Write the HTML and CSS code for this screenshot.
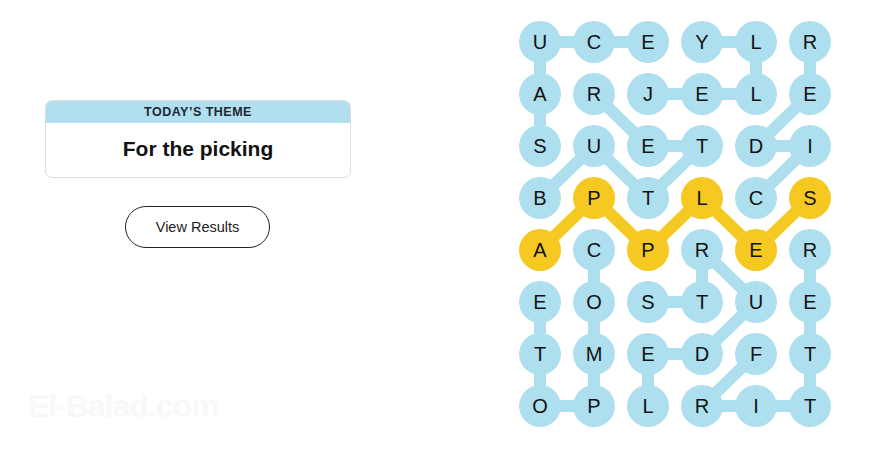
FILE: index.html
```html
<!DOCTYPE html>
<html lang="en">
<head>
<meta charset="utf-8">
<title>Strands</title>
<link rel="stylesheet" href="styles.css">
</head>
<body>
<main class="page">
  <section class="side">
    <div class="theme-card">
      <div class="theme-head">TODAY’S THEME</div>
      <div class="theme-body">For the picking</div>
    </div>
    <button class="results-btn">View Results</button>
  </section>
  <section class="board">
    <svg class="links" width="324" height="416" viewBox="0 0 324 416">
      <g fill="none" stroke="#aedfee" stroke-width="12" stroke-linejoin="round" stroke-linecap="round">
        <polyline points="27,130 27,78 27,26 81,26 135,26"/>
        <polyline points="135,78 189,78 243,78 243,26 189,26"/>
        <polyline points="243,182 297,130 243,130 297,78 297,26"/>
        <polyline points="27,182 81,130 135,182 189,130 135,130 81,78"/>
        <polyline points="81,234 81,286 81,338 81,390 27,390 27,338 27,286"/>
        <polyline points="135,286 189,286 189,234 243,286 189,338 135,338 135,390"/>
        <polyline points="243,338 189,390 243,390 297,390 297,338 297,286 297,234"/>
      </g>
      <polyline points="27,234 81,182 135,234 189,182 243,234 297,182" fill="none" stroke="#f5c922" stroke-width="12" stroke-linejoin="round" stroke-linecap="round"/>
    </svg>
    <div class="grid">
      <div class="cell"><span class="dot">U</span></div>
      <div class="cell"><span class="dot">C</span></div>
      <div class="cell"><span class="dot">E</span></div>
      <div class="cell"><span class="dot">Y</span></div>
      <div class="cell"><span class="dot">L</span></div>
      <div class="cell"><span class="dot">R</span></div>

      <div class="cell"><span class="dot">A</span></div>
      <div class="cell"><span class="dot">R</span></div>
      <div class="cell"><span class="dot">J</span></div>
      <div class="cell"><span class="dot">E</span></div>
      <div class="cell"><span class="dot">L</span></div>
      <div class="cell"><span class="dot">E</span></div>

      <div class="cell"><span class="dot">S</span></div>
      <div class="cell"><span class="dot">U</span></div>
      <div class="cell"><span class="dot">E</span></div>
      <div class="cell"><span class="dot">T</span></div>
      <div class="cell"><span class="dot">D</span></div>
      <div class="cell"><span class="dot">I</span></div>

      <div class="cell"><span class="dot">B</span></div>
      <div class="cell"><span class="dot spangram">P</span></div>
      <div class="cell"><span class="dot">T</span></div>
      <div class="cell"><span class="dot spangram">L</span></div>
      <div class="cell"><span class="dot">C</span></div>
      <div class="cell"><span class="dot spangram">S</span></div>

      <div class="cell"><span class="dot spangram">A</span></div>
      <div class="cell"><span class="dot">C</span></div>
      <div class="cell"><span class="dot spangram">P</span></div>
      <div class="cell"><span class="dot">R</span></div>
      <div class="cell"><span class="dot spangram">E</span></div>
      <div class="cell"><span class="dot">R</span></div>

      <div class="cell"><span class="dot">E</span></div>
      <div class="cell"><span class="dot">O</span></div>
      <div class="cell"><span class="dot">S</span></div>
      <div class="cell"><span class="dot">T</span></div>
      <div class="cell"><span class="dot">U</span></div>
      <div class="cell"><span class="dot">E</span></div>

      <div class="cell"><span class="dot">T</span></div>
      <div class="cell"><span class="dot">M</span></div>
      <div class="cell"><span class="dot">E</span></div>
      <div class="cell"><span class="dot">D</span></div>
      <div class="cell"><span class="dot">F</span></div>
      <div class="cell"><span class="dot">T</span></div>

      <div class="cell"><span class="dot">O</span></div>
      <div class="cell"><span class="dot">P</span></div>
      <div class="cell"><span class="dot">L</span></div>
      <div class="cell"><span class="dot">R</span></div>
      <div class="cell"><span class="dot">I</span></div>
      <div class="cell"><span class="dot">T</span></div>
    </div>
  </section>
  <div class="watermark">El-Balad.com</div>
</main>
</body>
</html>
```
FILE: styles.css
```css
* { box-sizing: border-box; }
html, body {
  margin: 0;
  padding: 0;
  background: #ffffff;
}
body {
  font-family: "Liberation Sans", Arial, sans-serif;
  color: #121212;
  width: 870px;
  height: 457px;
  overflow: hidden;
}
.page {
  position: relative;
  display: flex;
  align-items: flex-start;
  height: 457px;
}
.side {
  width: 513px;
  padding-left: 45px;
  padding-top: 100px;
  display: flex;
  flex-direction: column;
  align-items: flex-start;
}
.theme-card {
  width: 306px;
  height: 78px;
  border: 1px solid #dcdcdc;
  border-radius: 7px;
  overflow: hidden;
  display: flex;
  flex-direction: column;
}
.theme-head {
  background: #b1dfee;
  height: 22px;
  display: flex;
  align-items: center;
  justify-content: center;
  font-size: 12.5px;
  font-weight: 700;
  letter-spacing: 0.5px;
  color: #1d2733;
}
.theme-body {
  flex: 1;
  display: flex;
  align-items: center;
  justify-content: center;
  font-size: 21px;
  font-weight: 700;
  color: #121212;
  padding-bottom: 2px;
}
.results-btn {
  margin-top: 28px;
  margin-left: 80px;
  width: 145px;
  height: 42px;
  border: 1.3px solid #222;
  border-radius: 21px;
  background: #fff;
  font-family: "Liberation Sans", Arial, sans-serif;
  font-size: 14.5px;
  color: #222;
  padding: 0;
}
.board {
  position: relative;
  margin-top: 16px;
  width: 324px;
  height: 416px;
}
.links {
  position: absolute;
  left: 0;
  top: 0;
}
.grid {
  position: relative;
  display: grid;
  grid-template-columns: repeat(6, 54px);
  grid-template-rows: repeat(8, 52px);
}
.cell {
  display: flex;
  align-items: center;
  justify-content: center;
}
.dot {
  width: 42px;
  height: 42px;
  border-radius: 50%;
  background: #aedfee;
  display: flex;
  align-items: center;
  justify-content: center;
  font-size: 20px;
  color: #121212;
}
.dot.spangram {
  background: #f5c922;
}
.watermark {
  position: absolute;
  left: 28px;
  top: 388px;
  font-size: 32px;
  font-weight: 700;
  letter-spacing: -1px;
  color: #f8f8f8;
}
```
